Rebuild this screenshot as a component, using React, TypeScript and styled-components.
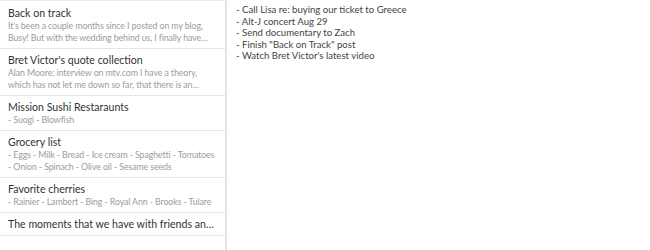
import React from 'react';
import styled, { createGlobalStyle } from 'styled-components';

const GlobalStyle = createGlobalStyle`
  html, body {
    margin: 0;
    padding: 0;
    background: #ffffff;
  }
  body {
    font-family: Lato, 'Open Sans', sans-serif;
  }
`;

const Layout = styled.div`
  display: flex;
  width: 650px;
  height: 250px;
  overflow: hidden;
`;

const Sidebar = styled.ul`
  list-style: none;
  margin: 0;
  padding: 1px 0 0;
  width: 227px;
  flex-shrink: 0;
  border-right: 2px solid #e4e4e4;
  border-top: 1px solid #e8eaee;
  box-sizing: border-box;
`;

const NoteItem = styled.li`
  padding: 5px 8px 4px 8px;
  border-bottom: 1px solid #e6e6e6;
`;

const NoteTitle = styled.div`
  font-size: 10.6px;
  line-height: 13px;
  color: #333333;
  white-space: nowrap;
  overflow: hidden;
  text-overflow: ellipsis;
`;

const NotePreview = styled.div<{ $lines: number }>`
  font-size: 8.8px;
  line-height: 12px;
  letter-spacing: -0.1px;
  color: #9c9c9c;
  display: -webkit-box;
  -webkit-box-orient: vertical;
  -webkit-line-clamp: ${(p) => p.$lines};
  overflow: hidden;
`;

const Editor = styled.div`
  flex: 1;
  padding: 4px 0 0 9px;
  font-size: 9.6px;
  line-height: 11.6px;
  color: #444444;
`;

const EditorLine = styled.div`
  white-space: pre;
`;

const notes = [
  {
    title: 'Back on track',
    preview:
      "It's been a couple months since I posted on my blog, Busy! But with the wedding behind us, I finally have some time to write again.",
    lines: 2,
  },
  {
    title: "Bret Victor's quote collection",
    preview:
      'Alan Moore: interview on mtv.com I have a theory, which has not let me down so far, that there is an inverse relationship between imagination and money.',
    lines: 2,
  },
  { title: 'Mission Sushi Restaraunts', preview: '- Suogi - Blowfish', lines: 1 },
  {
    title: 'Grocery list',
    preview:
      '- Eggs - Milk - Bread - Ice cream - Spaghetti - Tomatoes - Onion - Spinach - Olive oil - Sesame seeds',
    lines: 2,
  },
  {
    title: 'Favorite cherries',
    preview: '- Rainier - Lambert - Bing - Royal Ann - Brooks - Tulare',
    lines: 1,
  },
  {
    title: 'The moments that we have with friends and family are what matter most',
    preview: '',
    lines: 0,
  },
];

const todo = [
  '- Call Lisa re: buying our ticket to Greece',
  '- Alt-J concert Aug 29',
  '- Send documentary to Zach',
  '- Finish "Back on Track" post',
  "- Watch Bret Victor's latest video",
];

const App: React.FC = () => {
  return (
    <Layout>
      <GlobalStyle />
      <Sidebar>
        {notes.map((note) => (
          <NoteItem key={note.title}>
            <NoteTitle>{note.title}</NoteTitle>
            {note.preview ? (
              <NotePreview $lines={note.lines}>{note.preview}</NotePreview>
            ) : null}
          </NoteItem>
        ))}
      </Sidebar>
      <Editor>
        {todo.map((line) => (
          <EditorLine key={line}>{line}</EditorLine>
        ))}
      </Editor>
    </Layout>
  );
};

export default App;
